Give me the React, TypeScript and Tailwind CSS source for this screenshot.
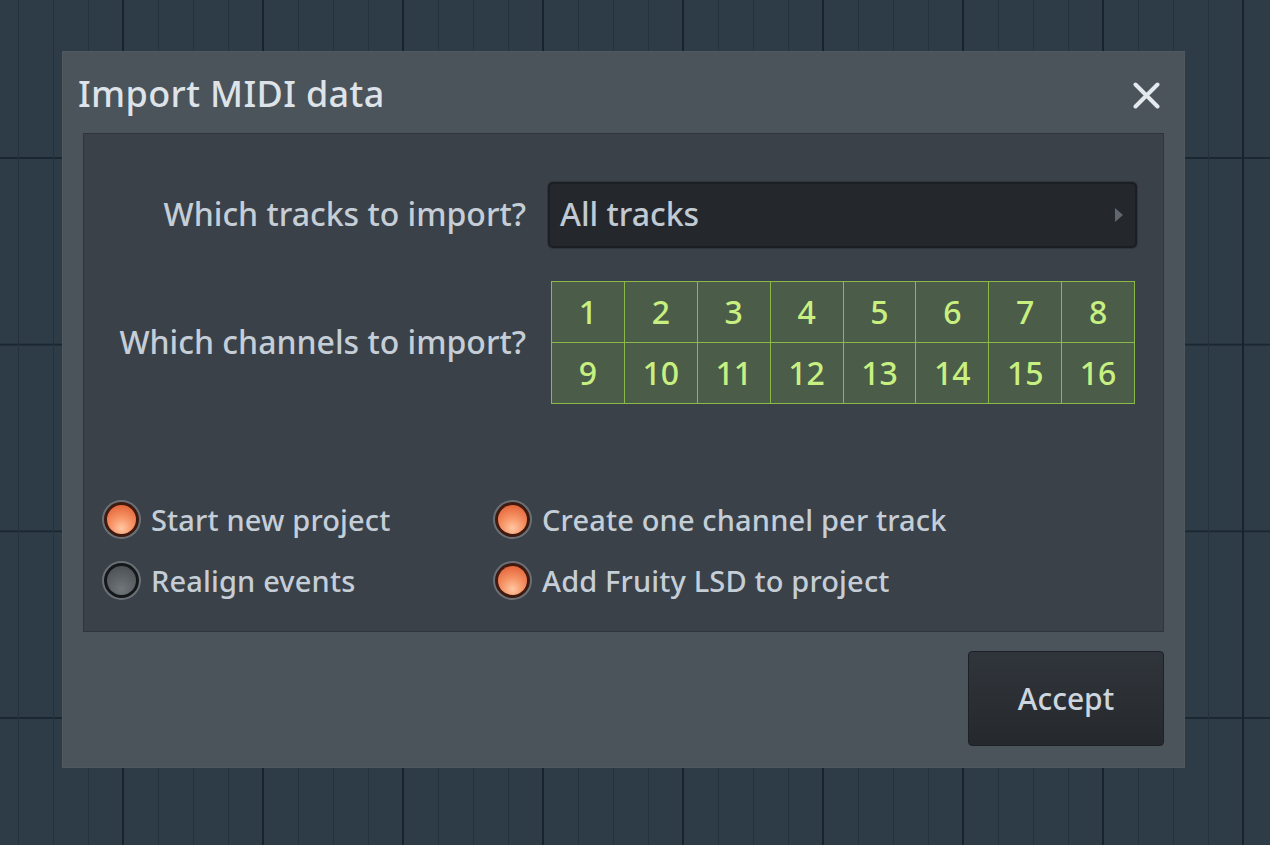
import React from "react";

function Radio({ on, label }: { on: boolean; label: string }) {
  return (
    <div className="flex items-center h-[38px] gap-[10px]">
      <div className="w-[39px] h-[39px] rounded-full bg-[#6a7076] p-[2px] shrink-0">
        <div
          className={
            on
              ? "w-full h-full rounded-full bg-[#3e1a10] p-[3px]"
              : "w-full h-full rounded-full bg-[#15181b] p-[3px]"
          }
        >
          <div
            className={
              on
                ? "w-full h-full rounded-full bg-[radial-gradient(circle_at_50%_80%,#ffc7a3_0%,#f79466_40%,#dc562c_100%)]"
                : "w-full h-full rounded-full bg-[radial-gradient(circle_at_50%_80%,#70767a_0%,#5a6064_50%,#464b4f_100%)]"
            }
          />
        </div>
      </div>
      <span className="text-[29px] font-medium tracking-[0.15px] leading-none text-[#c5ced7] whitespace-nowrap">{label}</span>
    </div>
  );
}

export default function App() {
  const nums = Array.from({ length: 16 }, (_, i) => i + 1);
  return (
    <div className="relative w-[1270px] h-[845px] overflow-hidden bg-[#2e3c47] [background-image:linear-gradient(90deg,#18232c_0_2px,transparent_2px),linear-gradient(90deg,#25323c_0_1px,transparent_1px),linear-gradient(180deg,#1c2831_0_2px,transparent_2px)] [background-size:140px_100%,35px_100%,100%_186.67px] [background-position:122px_0,18px_0,0_157px] font-['Noto_Sans','Open_Sans',sans-serif]">
      <div className="absolute left-[63px] top-[52px] w-[1121px] h-[715px] bg-[#4b535b] flex flex-col shadow-[0_0_0_1px_#505860]">
        {/* header */}
        <div className="h-[81px] flex items-center justify-between pl-[15px] pr-[24px]">
          <span className="text-[36px] font-medium tracking-[0.35px] leading-none text-[#dde3e9] mt-[3px]">Import MIDI data</span>
          <svg width="27" height="27" viewBox="0 0 27 27" className="mt-[6px]">
            <path d="M2.5 2.5 L24.5 24.5 M24.5 2.5 L2.5 24.5" stroke="#e4e9ee" strokeWidth="4" strokeLinecap="round" />
          </svg>
        </div>
        {/* panel */}
        <div className="mx-[20px] h-[499px] bg-[#3a4149] border border-[#2f353b] flex flex-col">
          <div className="pt-[48px] flex items-center">
            <div className="w-[442px] text-right text-[32px] font-medium leading-none text-[#c5ced7] -mt-[2px]">Which tracks to import?</div>
            <div className="ml-[22px] w-[589px] h-[66px] rounded-[5px] bg-[#24282d] border-[2px] border-[#1b1e22] shadow-[0_0_0_1px_#30353b] flex items-center justify-between pl-[10px] pr-[12px]">
              <span className="text-[32px] font-medium leading-none text-[#c1cad3] -mt-[2px]">All tracks</span>
              <svg width="8" height="14" viewBox="0 0 8 14">
                <path d="M0 0 L8 7 L0 14 Z" fill="#5f666d" />
              </svg>
            </div>
          </div>
          <div className="mt-[33px] flex items-center">
            <div className="w-[442px] text-right text-[32px] font-medium leading-none text-[#c5ced7] -mt-[2px]">Which channels to import?</div>
            <div className="ml-[25px] w-[584px] grid grid-cols-8 gap-px p-px bg-[#8ab84a]">
              {nums.map((n) => (
                <div
                  key={n}
                  className="h-[60px] bg-[#4b5c48] flex items-center justify-center text-[32px] font-medium leading-none text-[#c8f081]"
                >
                  {n}
                </div>
              ))}
            </div>
          </div>
          <div className="mt-[96px] pl-[18px] grid grid-cols-[391px_auto] gap-y-[23px]">
            <Radio on label="Start new project" />
            <Radio on label="Create one channel per track" />
            <Radio on={false} label="Realign events" />
            <Radio on label="Add Fruity LSD to project" />
          </div>
        </div>
        {/* footer */}
        <div className="flex justify-end px-[20px] pt-[19px]">
          <div className="w-[196px] h-[95px] rounded-[4px] border border-[#1d2125] bg-[linear-gradient(180deg,#30353b_0%,#2a2e33_60%,#25292e_100%)] flex items-center justify-center">
            <span className="text-[30px] font-medium leading-none text-[#cdd6de]">Accept</span>
          </div>
        </div>
      </div>
    </div>
  );
}
